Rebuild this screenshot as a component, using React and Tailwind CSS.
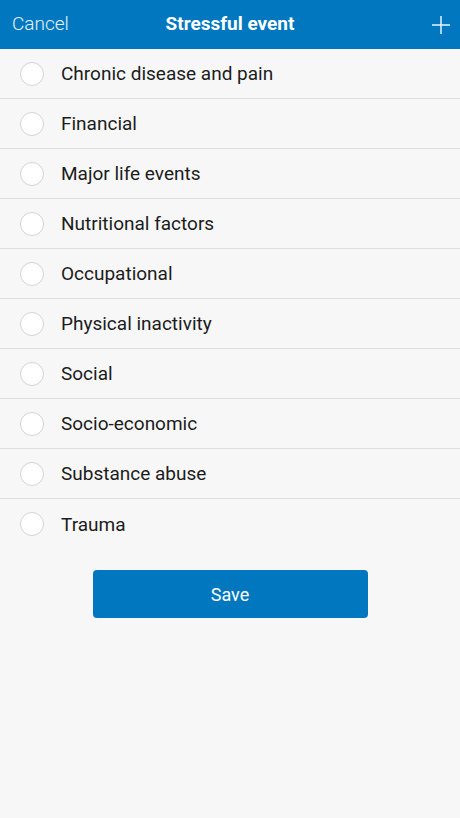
import React, { useState } from 'react';

const options = [
  'Chronic disease and pain',
  'Financial',
  'Major life events',
  'Nutritional factors',
  'Occupational',
  'Physical inactivity',
  'Social',
  'Socio-economic',
  'Substance abuse',
  'Trauma',
];

export default function App() {
  const [selected, setSelected] = useState(null);

  return (
    <div className="min-h-[818px] bg-[#f7f7f7] font-['Roboto',sans-serif]">
      {/* Header */}
      <header className="h-[49px] bg-[#0077be] flex items-center justify-between px-3 relative">
        <button className="text-white/90 text-[19px] font-light">Cancel</button>
        <h1 className="absolute left-0 right-0 text-center text-white text-[19px] font-bold pointer-events-none">
          Stressful event
        </h1>
        <button className="w-[18px] h-[18px] mr-[-2px]">
          <svg viewBox="0 0 18 18" className="w-[18px] h-[18px]">
            <path d="M9 0V18M0 9H18" stroke="#e8f2fa" strokeWidth="1.5" fill="none" />
          </svg>
        </button>
      </header>

      {/* Options */}
      <ul>
        {options.map((opt, idx) => (
          <li
            key={opt}
            onClick={() => setSelected(idx)}
            className={`h-[50px] flex items-center pl-5 ${idx < options.length - 1 ? 'border-b border-[#dedede]' : ''}`}
          >
            <span className="w-6 h-6 rounded-full border border-[#d4d4d4] bg-white flex items-center justify-center">
              {selected === idx && <span className="w-3 h-3 rounded-full bg-[#0077be]" />}
            </span>
            <span className="ml-[17px] pt-0.5 text-[19px] text-[#1c1c1c]">{opt}</span>
          </li>
        ))}
      </ul>

      <div className="flex justify-center mt-[21px]">
        <button className="w-[275px] h-12 bg-[#0077be] rounded-[4px] text-white text-[18px]">
          Save
        </button>
      </div>
    </div>
  );
}
